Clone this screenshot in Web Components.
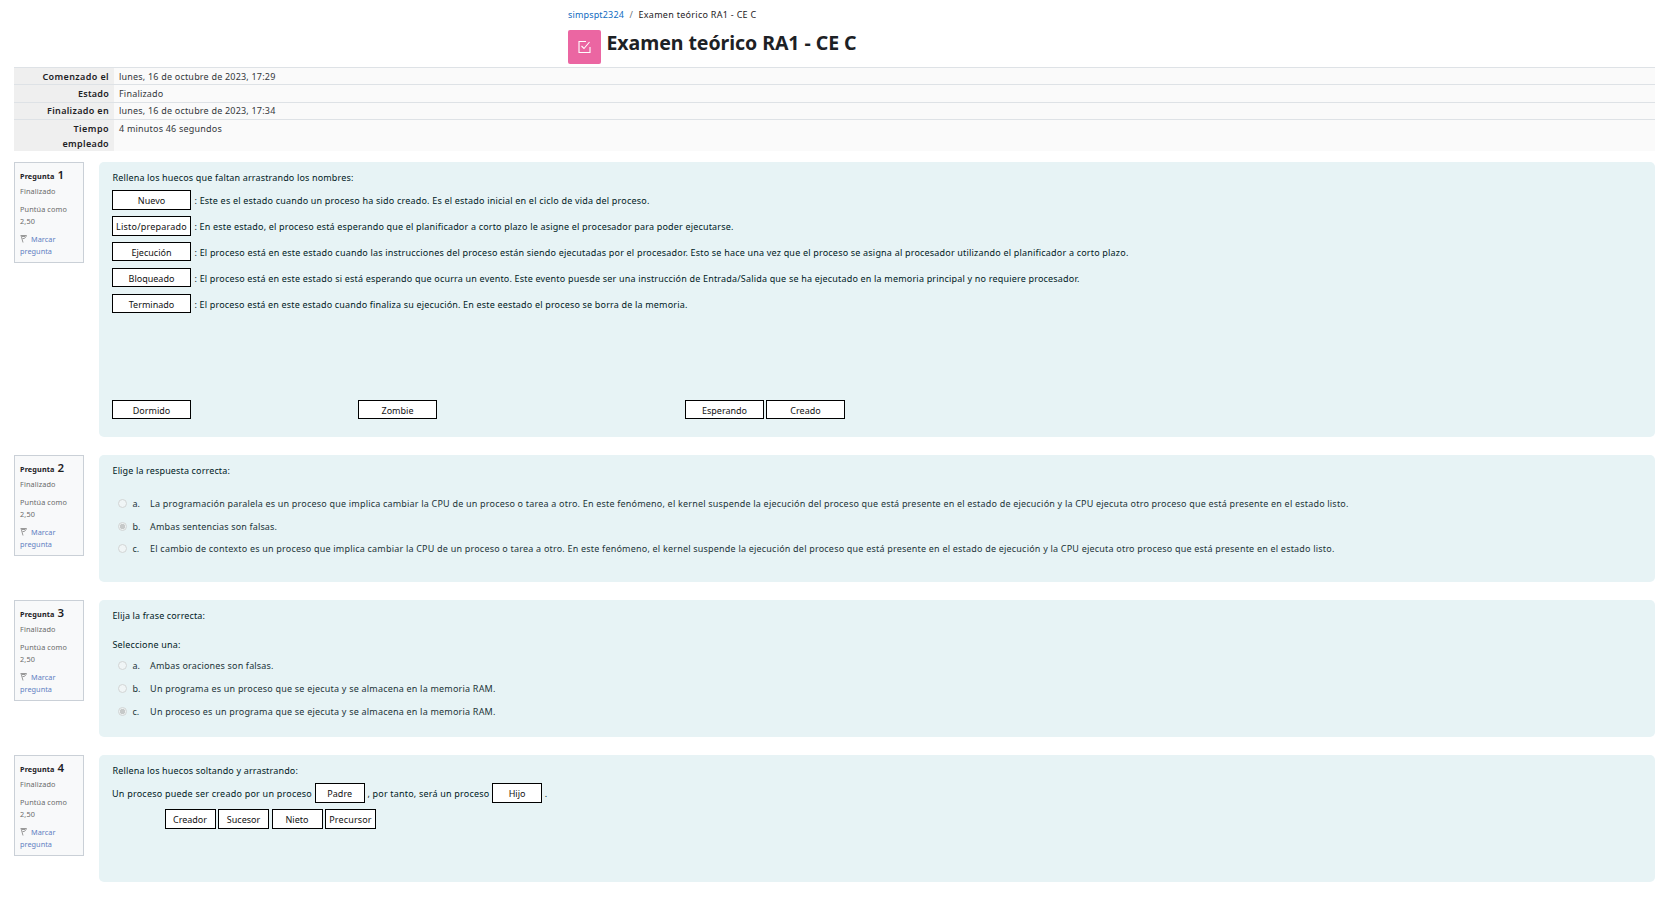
<!DOCTYPE html>
<html lang="es">
<head>
<meta charset="utf-8">
<title>Examen teórico RA1 - CE C</title>
<style>
html, body { margin: 0; background: #fff; }
body { font: 9px/14px "Noto Sans", "Open Sans", sans-serif; color: #1d2125; width: 1663px; height: 898px; overflow: hidden; }
</style>
</head>
<body>
<quiz-review></quiz-review>
<script>
function define(name, html, setup) {
  const t = document.createElement('template');
  t.innerHTML = html;
  customElements.define(name, class extends HTMLElement {
    connectedCallback() {
      if (this.shadowRoot) return;
      this.attachShadow({ mode: 'open' }).append(t.content.cloneNode(true));
      if (setup) setup(this, this.shadowRoot);
    }
  });
}

/* One line of text, tracked so that it fills its "w" width. */
define('text-line', `<style>
:host { display: inline-block; white-space: nowrap; vertical-align: top; flex: none; }
span { display: inline-block; }
</style><span><slot></slot></span>`, (el, root) => {
  const w = parseFloat(el.getAttribute('w'));
  if (!w) return;
  const span = root.querySelector('span');
  const n = el.textContent.length;
  const natural = span.getBoundingClientRect().width;
  span.style.letterSpacing = ((w - natural) / n).toFixed(4) + 'px';
  el.style.width = w + 'px';
});

define('drag-box', `<style>
:host { display: block; flex: none; box-sizing: border-box; width: var(--box-w, 79px); height: var(--box-h, 20px); border: 1px solid #000; background: #fff; color: #111; text-align: center; line-height: 19px; white-space: nowrap; }
</style><slot></slot>`);

define('page-heading', `<style>
:host { display: block; height: 67px; padding-left: 568px; box-sizing: border-box; }
nav { display: flex; padding-top: 8px; height: 30px; box-sizing: border-box; }
a { color: #0f6cbf; }
i { font-style: normal; color: #6a737b; width: 14.5px; text-align: center; }
.t { display: flex; gap: 5.5px; }
.icon { width: 33px; height: 34px; border-radius: 2px; background: #eb66a2; display: grid; place-items: center; }
h1 { margin: 0; font-size: 19.5px; line-height: 26px; font-weight: 700; }
</style>
<nav><a><text-line w="56">simpspt2324</text-line></a><i>/</i><text-line w="118">Examen teórico RA1 - CE C</text-line></nav>
<div class="t"><div class="icon"><svg width="14" height="14" viewBox="0 0 14 14" fill="none" stroke="#fff" stroke-width="1.1"><path d="M8 1.5H1V12.5H12V7"/><path d="M3.5 6L6 8.5L11.5 2"/></svg></div><h1><text-line w="250">Examen teórico RA1 - CE C</text-line></h1></div>`);

define('summary-row', `<style>
:host { display: grid; grid-template-columns: 100px 1fr; box-sizing: border-box; height: var(--row-h, 17px); border-top: 1px solid #dee2e6; background: #fafafa; line-height: 15px; }
.k { background: #efefef; font-weight: 600; display: flex; flex-direction: column; align-items: flex-end; padding: var(--row-pad, 1px) 5px 0 0; }
.v { padding: var(--row-pad, 1px) 0 0 5px; color: #33373b; }
</style><div class="k"><slot name="k"></slot></div><div class="v"><slot></slot></div>`);

define('question-info', `<style>
:host { display: block; box-sizing: border-box; width: 70px; height: 101px; border: 1px solid #cad0d7; background: #f8f9fa; padding: 5px 0 0 5px; font-size: 7.3px; line-height: 12px; color: #6a6a6a; }
.n { display: flex; gap: 3px; height: 17px; line-height: 17px; font-weight: 700; color: #1d2125; }
b { font-size: 11.5px; line-height: 14px; font-weight: 600; }
.s { height: 17.5px; }
.m { height: 30px; display: flex; flex-direction: column; }
.f { color: #5f80c2; display: flex; flex-direction: column; }
.f div { display: flex; }
svg { width: 11px; height: 12px; flex: none; }
</style>
<div class="n"><text-line w="34.5">Pregunta</text-line><b><slot></slot></b></div>
<div class="s"><text-line w="35.5">Finalizado</text-line></div>
<div class="m"><text-line w="47">Puntúa como</text-line><text-line w="15">2,50</text-line></div>
<div class="f"><div><svg viewBox="0 0 11 12" fill="none" stroke="#999" stroke-width="1"><path d="M.5 2.5H6.5L5.5 4.5L4 5.5H2.5M1.2 3L3 9.5M2 3.5H5"/></svg><text-line w="24.5">Marcar</text-line></div><text-line w="32">pregunta</text-line></div>`);

define('quiz-question', `<style>
:host { display: flex; gap: 15px; height: var(--question-h); margin-bottom: 18px; align-items: flex-start; }
.c { flex: 1; height: 100%; box-sizing: border-box; background: #e7f3f5; border-radius: 5px; padding: 9px 13px 0 13.5px; color: #001a1e; }
</style><question-info><span></span></question-info><div class="c"><slot></slot></div>`,
(el, root) => { root.querySelector('question-info span').textContent = el.getAttribute('n'); });

define('gap-row', `<style>
:host { display: flex; gap: 3.5px; height: 20px; margin: 0 0 6px -.5px; line-height: 21px; }
</style><slot></slot>`);

define('answer-option', `<style>
:host { display: grid; grid-template-columns: 15px 17.6px auto; align-items: start; height: 22.9px; padding-left: 5px; color: #1c3438; }
.r { box-sizing: border-box; width: 9px; height: 9px; margin-top: 2px; border: 1px solid #d2d5d5; border-radius: 50%; background: #f0f5f6; }
:host([on]) .r { background: radial-gradient(circle, #c6c9c9 0 2.3px, #eef2f2 3px); }
</style><div class="r"></div><span></span><div><slot></slot></div>`,
(el, root) => { root.querySelector('span').textContent = el.getAttribute('k'); });

define('quiz-review', `<style>
:host { display: block; }
main { padding: 0 8px 0 14px; }
.sum { margin-bottom: 11px; }
.bank { display: flex; margin: 86px 0 0 -.5px; }
.bank2 { display: flex; gap: 2.5px; margin-left: 52px; }
.short { --box-h: 19px; }
</style>
<page-heading></page-heading>
<main>
<div class="sum">
<summary-row><text-line slot="k" w="66.5">Comenzado el</text-line><text-line w="156.5">lunes, 16 de octubre de 2023, 17:29</text-line></summary-row>
<summary-row style="--row-h:18px"><text-line slot="k" w="31">Estado</text-line><text-line w="44.5">Finalizado</text-line></summary-row>
<summary-row style="--row-pad:0"><text-line slot="k" w="62">Finalizado en</text-line><text-line w="156.5">lunes, 16 de octubre de 2023, 17:34</text-line></summary-row>
<summary-row style="--row-h:32px"><text-line slot="k" w="35.5">Tiempo</text-line><text-line slot="k" w="46.5">empleado</text-line><text-line w="103">4 minutos 46 segundos</text-line></summary-row>
</div>
<quiz-question n="1" style="--question-h:275px">
<div style="height:19px"><text-line w="241">Rellena los huecos que faltan arrastrando los nombres:</text-line></div>
<gap-row><drag-box>Nuevo</drag-box><text-line w="455">: Este es el estado cuando un proceso ha sido creado. Es el estado inicial en el ciclo de vida del proceso.</text-line></gap-row>
<gap-row><drag-box><text-line w="71">Listo/preparado</text-line></drag-box><text-line w="539">: En este estado, el proceso está esperando que el planificador a corto plazo le asigne el procesador para poder ejecutarse.</text-line></gap-row>
<gap-row class="short"><drag-box>Ejecución</drag-box><text-line w="934">: El proceso está en este estado cuando las instrucciones del proceso están siendo ejecutadas por el procesador. Esto se hace una vez que el proceso se asigna al procesador utilizando el planificador a corto plazo.</text-line></gap-row>
<gap-row class="short"><drag-box>Bloqueado</drag-box><text-line w="885">: El proceso está en este estado si está esperando que ocurra un evento. Este evento puesde ser una instrucción de Entrada/Salida que se ha ejecutado en la memoria principal y no requiere procesador.</text-line></gap-row>
<gap-row class="short" style="margin-bottom:0"><drag-box>Terminado</drag-box><text-line w="493">: El proceso está en este estado cuando finaliza su ejecución. En este eestado el proceso se borra de la memoria.</text-line></gap-row>
<div class="bank short"><drag-box>Dormido</drag-box><drag-box style="margin-left:167px">Zombie</drag-box><drag-box style="margin-left:248px">Esperando</drag-box><drag-box style="margin-left:2px">Creado</drag-box></div>
</quiz-question>
<quiz-question n="2" style="--question-h:127px">
<div style="height:32.7px"><text-line w="117.5">Elige la respuesta correcta:</text-line></div>
<answer-option k="a."><text-line w="1198.5">La programación paralela es un proceso que implica cambiar la CPU de un proceso o tarea a otro. En este fenómeno, el kernel suspende la ejecución del proceso que está presente en el estado de ejecución y la CPU ejecuta otro proceso que está presente en el estado listo.</text-line></answer-option>
<answer-option k="b." on><text-line w="127">Ambas sentencias son falsas.</text-line></answer-option>
<answer-option k="c."><text-line w="1184.5">El cambio de contexto es un proceso que implica cambiar la CPU de un proceso o tarea a otro. En este fenómeno, el kernel suspende la ejecución del proceso que está presente en el estado de ejecución y la CPU ejecuta otro proceso que está presente en el estado listo.</text-line></answer-option>
</quiz-question>
<quiz-question n="3" style="--question-h:137px">
<div style="height:29px"><text-line w="92.5">Elija la frase correcta:</text-line></div>
<div style="height:21px"><text-line w="68">Seleccione una:</text-line></div>
<answer-option k="a."><text-line w="123.5">Ambas oraciones son falsas.</text-line></answer-option>
<answer-option k="b."><text-line w="345.5">Un programa es un proceso que se ejecuta y se almacena en la memoria RAM.</text-line></answer-option>
<answer-option k="c." on><text-line w="345.5">Un proceso es un programa que se ejecuta y se almacena en la memoria RAM.</text-line></answer-option>
</quiz-question>
<quiz-question n="4" style="--question-h:127px; margin-bottom:0">
<div style="height:19px"><text-line w="185.5">Rellena los huecos soltando y arrastrando:</text-line></div>
<gap-row style="--box-w:50px;gap:2.7px"><text-line w="200">Un proceso puede ser creado por un proceso</text-line><drag-box>Padre</drag-box><text-line w="122">, por tanto, será un proceso</text-line><drag-box>Hijo</drag-box><span>.</span></gap-row>
<div class="bank2" style="--box-w:51px"><drag-box>Creador</drag-box><drag-box>Sucesor</drag-box><drag-box>Nieto</drag-box><drag-box><text-line w="42.5">Precursor</text-line></drag-box></div>
</quiz-question>
</main>`);
</script>
</body>
</html>
